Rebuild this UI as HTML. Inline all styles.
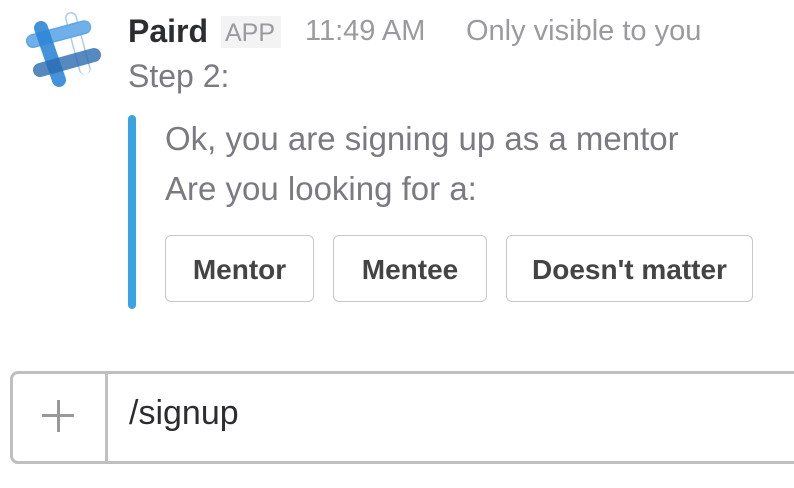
<!DOCTYPE html>
<html><head><style>
body{margin:0;width:794px;height:488px;background:#fff;position:relative;overflow:hidden;font-family:"Liberation Sans",sans-serif;}
.a{position:absolute;white-space:nowrap;line-height:1;}
.btn{position:absolute;top:235px;height:67px;padding-top:3px;border:1.5px solid #c8c8c8;border-radius:6px;box-sizing:border-box;font-weight:bold;font-size:28px;color:#444;display:flex;align-items:center;justify-content:center;}
</style></head><body>
<svg class="a" style="left:0;top:0" width="120" height="100" viewBox="0 0 120 100">
<g stroke-linecap="round" fill="none">
<line x1="71" y1="18" x2="85" y2="70" stroke="#a8cdf0" stroke-width="12" stroke-dasharray="3 2.5"/>
<line x1="71" y1="18" x2="85" y2="70" stroke="#fff" stroke-width="9"/>
<line x1="33" y1="41" x2="85" y2="27" stroke="#5ea6e6" stroke-width="14" stroke-dasharray="3 2"/>
<line x1="33" y1="41" x2="85" y2="27" stroke="#70b0ea" stroke-width="11"/>
<line x1="41" y1="28" x2="59" y2="80" stroke="#2f86d6" stroke-width="14" opacity="0.9"/>
<line x1="40" y1="70" x2="94" y2="55" stroke="#2a6cb0" stroke-width="14" opacity="0.8"/>
</g></svg>
<div class="a" style="left:128px;top:15px;font-size:32px;font-weight:bold;color:#2c2d30">Paird</div>
<div class="a" style="left:221px;top:16px;width:60px;height:32px;background:#f3f3f3"></div>
<div class="a" style="left:225px;top:21px;font-size:25px;color:#9a9a9f">APP</div>
<div class="a" style="left:305px;top:17px;font-size:29px;color:#9a9a9f">11:49 AM</div>
<div class="a" style="left:466px;top:17px;font-size:29px;color:#9a9a9f">Only visible to you</div>
<div class="a" style="left:128px;top:60px;font-size:32px;color:#7a7a80">Step 2:</div>
<div class="a" style="left:128px;top:115px;width:8px;height:194px;border-radius:4px;background:#3aa3e3"></div>
<div class="a" style="left:165px;top:122px;font-size:33px;color:#7a7a80">Ok, you are signing up as a mentor</div>
<div class="a" style="left:165px;top:172px;font-size:33px;color:#7a7a80">Are you looking for a:</div>
<div class="btn" style="left:165px;width:149px">Mentor</div>
<div class="btn" style="left:333px;width:154px">Mentee</div>
<div class="btn" style="left:506px;width:247px">Doesn't matter</div>
<div class="a" style="left:10px;top:371px;width:800px;height:93px;border:3px solid #bfbfbf;border-radius:8px;box-sizing:border-box"></div>
<div class="a" style="left:105px;top:373px;width:3px;height:89px;background:#bfbfbf"></div>
<div class="a" style="left:42px;top:414px;width:32px;height:3px;background:#999"></div>
<div class="a" style="left:57px;top:400px;width:3px;height:32px;background:#999"></div>
<div class="a" style="left:129px;top:396px;font-size:34px;color:#2c2d30">/signup</div>
</body></html>
